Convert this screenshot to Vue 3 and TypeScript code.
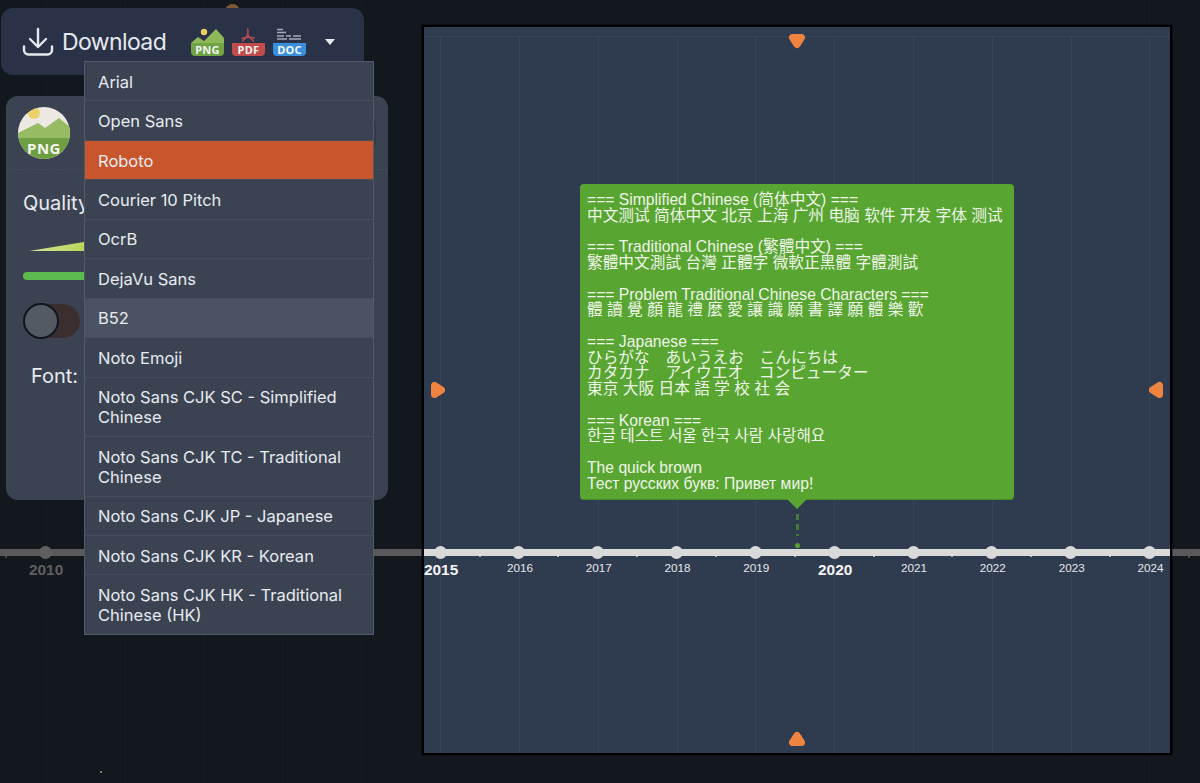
<script setup lang="ts">
const STEP = 78.82
const ORIGIN = 46

const fonts = [
  { name: 'Arial' },
  { name: 'Open Sans' },
  { name: 'Roboto', selected: true },
  { name: 'Courier 10 Pitch' },
  { name: 'OcrB' },
  { name: 'DejaVu Sans' },
  { name: 'B52', hovered: true },
  { name: 'Noto Emoji' },
  { name: 'Noto Sans CJK SC - Simplified Chinese' },
  { name: 'Noto Sans CJK TC - Traditional Chinese' },
  { name: 'Noto Sans CJK JP - Japanese' },
  { name: 'Noto Sans CJK KR - Korean' },
  { name: 'Noto Sans CJK HK - Traditional Chinese (HK)' }
]

const bgLines = [0, 1, 2, 3, 4, 14].map(i => ORIGIN + i * STEP)

// stage inner box starts at x=424 in page coordinates
const years = Array.from({ length: 10 }, (_, i) => ({
  year: 2015 + i,
  major: (2015 + i) % 5 === 0,
  x: ORIGIN + (i + 5) * STEP - 424
}))

const noteText = `=== Simplified Chinese (简体中文) ===
中文测试 简体中文 北京 上海 广州 电脑 软件 开发 字体 测试

=== Traditional Chinese (繁體中文) ===
繁體中文測試 台灣 正體字 微軟正黑體 字體測試

=== Problem Traditional Chinese Characters ===
體 讀 覺 顏 龍 禮 麼 愛 讓 識 願 書 譯 願 體 樂 歡

=== Japanese ===
ひらがな　あいうえお　こんにちは
カタカナ　アイウエオ　コンピューター
東京 大阪 日本 語 学 校 社 会

=== Korean ===
한글 테스트 서울 한국 사람 사랑해요

The quick brown
Тест русских букв: Привет мир!`
</script>

<template>
  <div class="page">
    <!-- timeline running behind the panels -->
    <div class="backdrop">
      <span v-for="x in bgLines" :key="x" class="bg-grid" :style="{ left: x + 'px' }"></span>
      <div class="bg-axis"></div>
      <span class="bg-dot"></span>
      <span class="bg-half" style="left: 5px"></span>
      <span class="bg-half" style="left: 1188px"></span>
      <span class="bg-year">2010</span>
      <span class="bg-marker"></span>
      <span class="bg-speck"></span>
    </div>

    <aside class="side">
      <div class="toolbar">
        <svg class="dl-icon" width="32" height="30" viewBox="0 0 32 30" fill="none" stroke="#e6e9ee" stroke-width="2.4" stroke-linecap="round" stroke-linejoin="round">
          <path d="M16 2v17" />
          <path d="M8 12l8 8 8-8" />
          <path d="M2 19.5v3.5a4.5 4.5 0 0 0 4.5 4.5h19a4.5 4.5 0 0 0 4.5-4.5v-3.5" />
        </svg>
        <span class="dl-label">Download</span>
        <div class="formats">
          <svg width="33" height="28" viewBox="0 0 33 28">
            <path d="M0 15l7-6 6 4 12-12 8 9v6H0z" fill="#8fb85a" />
            <circle cx="13" cy="4" r="3.2" fill="#e8cf5e" />
            <path d="M0 15h33v9a4 4 0 0 1-4 4H4a4 4 0 0 1-4-4z" fill="#6fa344" />
            <text x="16.5" y="26" text-anchor="middle" class="fmt-text">PNG</text>
          </svg>
          <svg width="33" height="28" viewBox="0 0 33 28">
            <path d="M15.5 1c1.5 4 0 8-5 12M15.5 6c1 3 3.500 5 6 7M10 10.500c4-1.500 8-1.500 12-.5" fill="none" stroke="#b34a50" stroke-width="1.6" stroke-linecap="round" />
            <path d="M0 15h33v9a4 4 0 0 1-4 4H4a4 4 0 0 1-4-4z" fill="#c24b4b" />
            <text x="16.5" y="26" text-anchor="middle" class="fmt-text">PDF</text>
          </svg>
          <svg width="33" height="28" viewBox="0 0 33 28">
            <path d="M4 1.500h6M4 4.500h9M4 8h7M13 8h5M20 8h8M4 11h10M16 11h12" stroke="#a3abbb" stroke-width="1.3" fill="none" />
            <path d="M0 15h33v9a4 4 0 0 1-4 4H4a4 4 0 0 1-4-4z" fill="#3a8fdc" />
            <text x="16.5" y="26" text-anchor="middle" class="fmt-text">DOC</text>
          </svg>
        </div>
        <span class="caret"></span>
      </div>

      <div class="settings">
        <div class="settings-head">
          <svg width="52" height="52" viewBox="0 0 52 52">
            <defs>
              <clipPath id="png-round"><circle cx="26" cy="26" r="26" /></clipPath>
            </defs>
            <g clip-path="url(#png-round)">
              <rect width="52" height="52" fill="#ebe9e2" />
              <circle cx="16" cy="6" r="6" fill="#ecd266" />
              <path d="M0 26l20-10 7 5 14-10 11 9v12H0z" fill="#97bb63" />
              <rect y="31" width="52" height="21" fill="#6e9f43" />
            </g>
            <text x="26" y="47" text-anchor="middle" class="png-text">PNG</text>
          </svg>
          <span class="head-peek"></span>
        </div>
        <div class="settings-body">
          <div class="quality">Quality</div>
          <div class="wedge"></div>
          <div class="bar"></div>
          <div class="toggle"><span class="knob"></span></div>
          <div class="font-row">
            <span>Font:</span>
            <span class="font-select"></span>
          </div>
        </div>
      </div>

      <ul class="font-menu">
        <li
          v-for="f in fonts"
          :key="f.name"
          :class="{ selected: f.selected, hovered: f.hovered }"
        >{{ f.name }}</li>
      </ul>
    </aside>

    <main class="stage">
      <div class="h-grid"></div>
      <span v-for="y in years" :key="y.year" class="v-grid" :style="{ left: y.x + 'px' }"></span>

      <span class="handle handle-top"><svg width="18" height="16" viewBox="0 0 18 16"><path d="M4.500 4.500h9L9 11.500z" /></svg></span>
      <span class="handle handle-bottom"><svg width="18" height="16" viewBox="0 0 18 16"><path d="M4.500 11.500h9L9 4.500z" /></svg></span>
      <span class="handle handle-left"><svg width="16" height="18" viewBox="0 0 16 18"><path d="M4.500 4.500v9L11.500 9z" /></svg></span>
      <span class="handle handle-right"><svg width="16" height="18" viewBox="0 0 16 18"><path d="M11.500 4.500v9L4.500 9z" /></svg></span>

      <div class="note">{{ noteText }}</div>
      <span class="note-tail"></span>
      <span class="note-stem"></span>
      <span class="note-dot"></span>

      <div class="axis"></div>
      <template v-for="y in years" :key="y.year">
        <span class="tick" :style="{ left: y.x + 'px' }"></span>
        <span class="half" :style="{ left: y.x + STEP / 2 + 'px' }"></span>
        <span class="year" :class="{ major: y.major }" :style="{ left: y.x + 'px' }">{{ y.year }}</span>
      </template>
    </main>
  </div>
</template>

<style>
html,
body {
  background: #13181f;
}
</style>

<style scoped>
.page {
  position: relative;
  width: 1200px;
  height: 783px;
  display: flex;
  align-items: flex-start;
  overflow: hidden;
  background: #13181f;
  font-family: Inter, "Noto Sans", sans-serif;
}

.backdrop {
  position: absolute;
  inset: 0;
}

.bg-grid {
  position: absolute;
  top: 0;
  bottom: 0;
  width: 1px;
  background: #171c24;
}

.bg-axis {
  position: absolute;
  left: 0;
  right: 0;
  top: 549px;
  height: 7px;
  background: #5a5a5a;
}

.bg-dot {
  position: absolute;
  left: 39px;
  top: 546px;
  width: 13px;
  height: 13px;
  border-radius: 50%;
  background: #5f5f5f;
}

.bg-half {
  position: absolute;
  top: 556px;
  width: 2px;
  height: 2px;
  background: #4a4a4a;
}

.bg-year {
  position: absolute;
  left: 29px;
  top: 561px;
  font: bold 15.4px "Liberation Sans", sans-serif;
  color: #5f5f5f;
}

.bg-marker {
  position: absolute;
  left: 225px;
  top: 4px;
  width: 15px;
  height: 15px;
  border-radius: 50%;
  background: #7d5a34;
}

.bg-speck {
  position: absolute;
  left: 100px;
  top: 771px;
  width: 2px;
  height: 2px;
  background: #6f8a5a;
}

.side {
  position: relative;
  flex: none;
  width: 388px;
  padding: 8px 0 0 1px;
  box-sizing: border-box;
  display: flex;
  flex-direction: column;
}

.toolbar {
  width: 363px;
  height: 67px;
  box-sizing: border-box;
  padding: 0 0 0 21px;
  display: flex;
  align-items: center;
  background: #2a3248;
  border-radius: 12px;
}

.dl-icon {
  flex: none;
}

.dl-label {
  margin-left: 8px;
  font-size: 23px;
  letter-spacing: -0.6px;
  color: #e6e9ee;
}

.formats {
  display: flex;
  gap: 8px;
  margin-left: 25px;
  margin-top: 1px;
}

.fmt-text {
  font: bold 11px "Noto Sans", sans-serif;
  letter-spacing: 0.3px;
  fill: #f2f4f2;
}

.caret {
  margin-left: 19px;
  width: 0;
  height: 0;
  border-left: 5.5px solid transparent;
  border-right: 5.5px solid transparent;
  border-top: 6px solid #e8ebf0;
}

.settings {
  width: 382px;
  height: 404px;
  margin: 21px 0 0 5px;
  box-sizing: border-box;
  background: #3b4353;
  border-radius: 12px;
  overflow: hidden;
}

.settings-head {
  height: 74px;
  box-sizing: border-box;
  padding: 11px 12px 0 12px;
  display: flex;
  justify-content: space-between;
  border-bottom: 1px dashed #444c5c;
}

.png-text {
  font: bold 15px "Noto Sans", sans-serif;
  fill: #f4f5ef;
  letter-spacing: 0.5px;
}

.head-peek {
  width: 24px;
  height: 36px;
  margin-top: 8px;
  border-radius: 0 10px 10px 0;
  background: #333a49;
}

.settings-body {
  padding: 20px 0 0 17px;
}

.quality {
  font-size: 20px;
  line-height: 27px;
  color: #e8ebef;
}

.wedge {
  width: 122px;
  height: 20px;
  margin: 14px 0 0 6px;
  background: linear-gradient(90deg, #d8e29a, #b5d85a 45%);
  clip-path: polygon(0 100%, 100% 0, 100% 100%);
}

.bar {
  width: 300px;
  height: 8px;
  margin-top: 21px;
  border-radius: 4px;
  background: #5cb94f;
}

.toggle {
  position: relative;
  width: 57px;
  height: 34px;
  margin-top: 24px;
  border-radius: 17px;
  background: #3a2f2e;
}

.knob {
  position: absolute;
  left: 0;
  top: -1px;
  width: 32px;
  height: 32px;
  border: 2px solid #12161c;
  border-radius: 50%;
  background: #545a63;
}

.font-row {
  display: flex;
  align-items: center;
  gap: 6px;
  margin: 22px 0 0 8px;
  font-size: 20px;
  color: #e8ebef;
}

.font-select {
  width: 200px;
  height: 32px;
  background: #333a49;
}

.font-menu {
  position: absolute;
  left: 84px;
  top: 61px;
  width: 290px;
  margin: 0;
  padding: 0;
  list-style: none;
  box-sizing: border-box;
  background: #3b4353;
  border: 1px solid #525a6a;
  font-size: 16.5px;
  line-height: 20px;
  color: #e8ebf0;
}

.font-menu li {
  padding: 9.6px 13px 8.86px;
  border-bottom: 1px solid #464e5e;
  box-sizing: border-box;
}

.font-menu li:last-child {
  border-bottom: none;
}

.font-menu li.selected {
  background: #c9552d;
}

.font-menu li.hovered {
  background: #4b5362;
}

.stage {
  position: relative;
  flex: none;
  width: 750px;
  height: 730px;
  margin: 25px 0 0 34px;
  box-sizing: border-box;
  border: 2px solid #000;
  box-shadow: 0 0 0 1px rgba(0, 0, 0, 0.4);
  background: #2f3b4e;
  overflow: hidden;
}

.h-grid {
  position: absolute;
  left: 0;
  right: 0;
  top: 9px;
  height: 1px;
  background: #364255;
}

.v-grid {
  position: absolute;
  top: 9px;
  bottom: 0;
  width: 1px;
  background: #384456;
}

.handle {
  position: absolute;
  display: flex;
}

.handle path {
  fill: #ef8340;
  stroke: #ef8340;
  stroke-width: 7px;
  stroke-linejoin: round;
}

.handle-top {
  left: 364px;
  top: 6px;
}

.handle-bottom {
  left: 364px;
  bottom: 6px;
}

.handle-left {
  left: 6px;
  top: 354px;
}

.handle-right {
  right: 6px;
  top: 354px;
}

.note {
  position: absolute;
  left: 156px;
  top: 157px;
  width: 434px;
  height: 315px;
  box-sizing: border-box;
  padding: 8px 7px;
  background: #59a532;
  border-radius: 4px;
  font-family: "Liberation Sans", "Noto Sans CJK SC", sans-serif;
  font-size: 15.7px;
  line-height: 15.75px;
  color: #eef5e8;
  white-space: pre-wrap;
  box-shadow: 0 1px 0 #4b8c2a;
}

.note-tail {
  position: absolute;
  left: 363px;
  top: 472px;
  width: 0;
  height: 0;
  border-left: 10px solid transparent;
  border-right: 10px solid transparent;
  border-top: 10px solid #59a532;
}

.note-stem {
  position: absolute;
  left: 371.5px;
  top: 487px;
  width: 3px;
  height: 22px;
  background: repeating-linear-gradient(180deg, #47793c 0 6px, transparent 6px 10px);
}

.note-dot {
  position: absolute;
  left: 370.5px;
  top: 515.5px;
  width: 5px;
  height: 5px;
  border-radius: 50%;
  background: #59a532;
}

.axis {
  position: absolute;
  left: 0;
  right: 0;
  top: 522px;
  height: 7px;
  background: #dadada;
}

.tick {
  position: absolute;
  top: 519px;
  width: 13px;
  height: 13px;
  margin-left: -6.5px;
  border-radius: 50%;
  background: #d9d9d9;
}

.half {
  position: absolute;
  top: 528px;
  width: 2px;
  height: 2px;
  margin-left: -1px;
  border-radius: 50%;
  background: #d9d9d9;
}

.year {
  position: absolute;
  top: 534px;
  transform: translateX(-50%);
  margin-left: 1px;
  font: 11.7px "Liberation Sans", sans-serif;
  color: #e8e8e8;
}

.year.major {
  top: 534px;
  font: bold 15.4px "Liberation Sans", sans-serif;
  color: #f5f5f5;
}
</style>
